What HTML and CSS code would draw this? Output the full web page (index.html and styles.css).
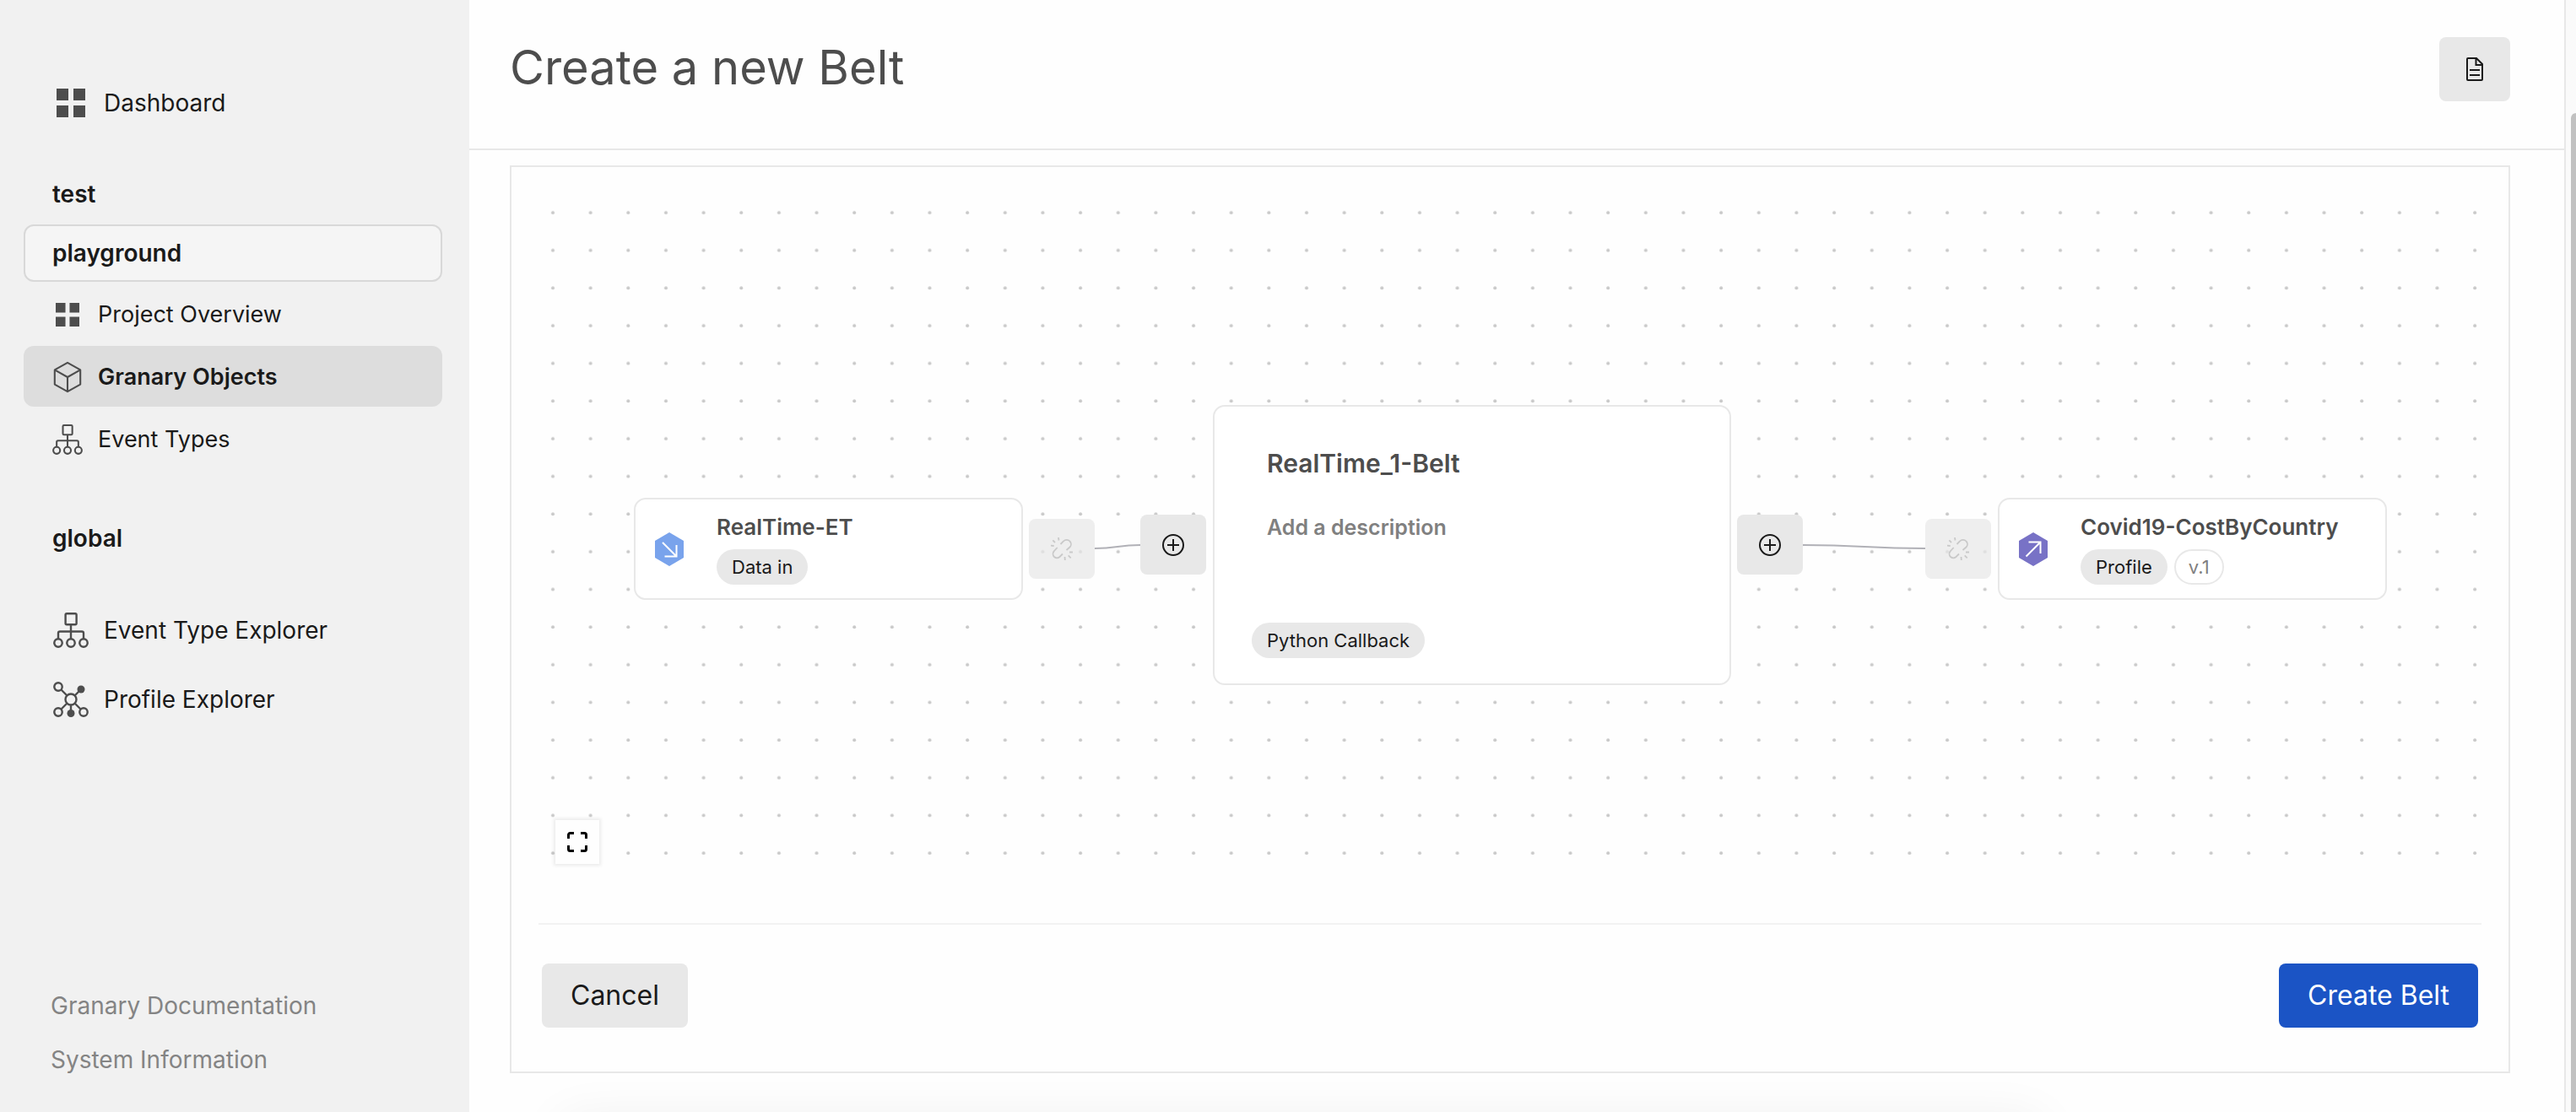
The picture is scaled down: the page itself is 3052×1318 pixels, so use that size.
FILE: index.html
```html
<!DOCTYPE html>
<html lang="en">
<head>
<meta charset="utf-8">
<title>Create a new Belt</title>
<link rel="stylesheet" href="styles.css">
</head>
<body>
<svg class="defs" aria-hidden="true">
  <symbol id="i-grid" viewBox="0 0 34 34"><path d="M0 0h14v14H0zM20 0h14v14H20zM0 20h14v14H0zM20 20h14v14H20z" fill="currentColor"/></symbol>
  <symbol id="i-cube" viewBox="0 0 36 40"><path d="M18 2 34 11v18l-16 9-16-9V11zM2 11l16 9 16-9M18 20v18" fill="none" stroke="currentColor" stroke-width="2.200" stroke-linejoin="round"/></symbol>
  <symbol id="i-tree" viewBox="0 0 42 42"><g fill="none" stroke="currentColor" stroke-width="2.4"><rect x="14.6" y="1.2" width="13" height="13" rx="1.5"/><path d="M21 14v17M6 31v-6.500a2 2 0 0 1 2-2h26a2 2 0 0 1 2 2V31"/><circle cx="6" cy="36" r="4.700"/><circle cx="21" cy="36" r="4.700"/><circle cx="36" cy="36" r="4.700"/></g></symbol>
  <symbol id="i-hub" viewBox="0 0 42 42"><g fill="none" stroke="currentColor" stroke-width="2.4"><circle cx="21" cy="21" r="6.500"/><circle cx="6" cy="6" r="4.700"/><circle cx="6" cy="36" r="4.700"/><circle cx="36" cy="36" r="4.700"/><path d="m9.500 9.500 7 7M9.500 32.500l7-7M32.500 32.500l-7-7M25.500 16.500 32 10M21 27.500V36"/></g><circle cx="33" cy="9" r="4.500" fill="currentColor"/><circle cx="21" cy="37.500" r="4.500" fill="currentColor"/></symbol>
  <symbol id="i-plus" viewBox="0 0 26 26"><path d="M13 6v14M6 13h14" fill="none" stroke="currentColor" stroke-width="2"/><circle cx="13" cy="13" r="12" fill="none" stroke="currentColor" stroke-width="2"/></symbol>
  <symbol id="i-unlink" viewBox="0 0 26 28"><path d="M11.500 8 15 4.500a5 5 0 0 1 7.500 0 5 5 0 0 1 0 7L18.500 15M7.700 12 4 16a5 5 0 0 0 0 7 5 5 0 0 0 6.500 0L14 19.500M9 0l.5 3.500M2.300 3.300 5 6M0 9.700l3.700.3M16.500 23l.3 4M20.700 21.300l3 3M22 17.500h4" fill="none" stroke="currentColor" stroke-width="1.800"/></symbol>
</svg>

<div class="app">
  <aside class="sidebar">
    <nav class="nav">
      <a class="link link-top" href="#"><svg class="icon-grid"><use href="#i-grid"/></svg>Dashboard</a>
      <a class="project project-test" href="#">test</a>
      <a class="project project-open" href="#">playground</a>
      <a class="link link-sub" href="#"><svg class="icon-sub icon-sub-grid"><use href="#i-grid"/></svg>Project Overview</a>
      <a class="link link-sub link-active" href="#"><svg class="icon-sub"><use href="#i-cube"/></svg>Granary Objects</a>
      <a class="link link-sub" href="#"><svg class="icon-sub"><use href="#i-tree"/></svg>Event Types</a>
      <p class="project project-global">global</p>
      <a class="link link-explorer" href="#"><svg class="icon-large"><use href="#i-tree"/></svg>Event Type Explorer</a>
      <a class="link link-explorer" href="#"><svg class="icon-large"><use href="#i-hub"/></svg>Profile Explorer</a>
    </nav>
    <div class="sidebar-foot">
      <a class="foot-link" href="#">Granary Documentation</a>
      <a class="foot-link" href="#">System Information</a>
    </div>
  </aside>

  <main class="main">
    <header class="header">
      <h1 class="title">Create a new Belt</h1>
      <button class="btn btn-doc" type="button" aria-label="Documentation">
        <svg width="20" height="28" viewBox="0 0 20 28" fill="none" stroke="currentColor" stroke-width="2"><path d="M2 1h10l7 7v18a1 1 0 0 1-1 1H2a1 1 0 0 1-1-1V2a1 1 0 0 1 1-1zM11.500 1v8H19M4 15h12M4 21h12"/></svg>
      </button>
    </header>

    <section class="panel">
      <div class="canvas">
        <svg class="dots" aria-hidden="true">
          <defs><pattern id="dot" x="-5" y="0" width="44.650" height="44.650" patternUnits="userSpaceOnUse"><circle cx="22" cy="22" r="2" fill="#c9c9c9"/></pattern></defs>
          <rect width="100%" height="100%" fill="url(#dot)"/>
        </svg>
        <div class="flow">
          <svg class="edges" viewBox="0 0 2078 332" aria-hidden="true"><path d="M546 170C573 170 573 166 600 166M1385 166C1458 166 1458 170 1530 170" fill="none" stroke="#b1b1b7" stroke-width="2"/></svg>
          <article class="node node-source">
            <svg class="hex" width="36" height="40" viewBox="0 0 36 40"><path d="M18 0l17 10v20L18 40 1 30V10z" fill="#79a3ec"/><path d="M10 12l16 16M12.500 28.500H26.500V15" fill="none" stroke="#fff" stroke-width="2"/></svg>
            <div class="node-body">
              <h2 class="node-title">RealTime-ET</h2>
              <div class="chips"><span class="chip">Data in</span></div>
            </div>
          </article>
          <button class="port port-off port-source" type="button" disabled aria-label="Unlink input"><svg width="26" height="28"><use href="#i-unlink"/></svg></button>
          <button class="port port-in" type="button" aria-label="Add input"><svg width="26" height="26"><use href="#i-plus"/></svg></button>
          <article class="node node-belt">
            <h2 class="belt-title">RealTime_1-Belt</h2>
            <p class="belt-text">Add a description</p>
            <span class="chip chip-belt">Python Callback</span>
          </article>
          <button class="port port-out" type="button" aria-label="Add output"><svg width="26" height="26"><use href="#i-plus"/></svg></button>
          <button class="port port-off port-target" type="button" disabled aria-label="Unlink output"><svg width="26" height="28"><use href="#i-unlink"/></svg></button>
          <article class="node node-target">
            <svg class="hex" width="36" height="40" viewBox="0 0 36 40"><path d="M18 0l17 10v20L18 40 1 30V10z" fill="#7872c6"/><path d="M9.500 28.500 26 12M12.500 11.500H26.500V25" fill="none" stroke="#fff" stroke-width="2"/></svg>
            <div class="node-body">
              <h2 class="node-title">Covid19-CostByCountry</h2>
              <div class="chips"><span class="chip">Profile</span><span class="chip chip-line">v.1</span></div>
            </div>
          </article>
        </div>
        <button class="fit" type="button" aria-label="Fit view"><svg width="24" height="24" viewBox="0 0 24 24" fill="none" stroke="#000" stroke-width="3"><path d="M1.500 8V3.500a2 2 0 0 1 2-2H8M16 1.500h4.500a2 2 0 0 1 2 2V8M22.500 16v4.500a2 2 0 0 1-2 2H16M8 22.500H3.500a2 2 0 0 1-2-2V16"/></svg></button>
      </div>
      <footer class="actions">
        <button class="btn" type="button">Cancel</button>
        <button class="btn btn-primary" type="button">Create Belt</button>
      </footer>
    </section>
    <div class="tray" aria-hidden="true"></div>
  </main>
  <div class="scroll" aria-hidden="true"><div class="thumb"></div></div>
</div>
</body>
</html>
```
FILE: styles.css
```css
* { box-sizing: border-box; }

body {
  margin: 0;
  background: #fefefe;
  color: #1a1a1a;
  font-family: Inter, "Liberation Sans", sans-serif;
  font-size: 28px;
  line-height: 36px;
}

h1, h2, p { margin: 0; font-weight: inherit; font-size: inherit; }
a { color: inherit; text-decoration: none; }
button { font: inherit; color: inherit; border: 0; padding: 0; cursor: pointer; }
svg { display: block; flex: none; }
.defs { position: absolute; width: 0; height: 0; }

.app { display: flex; height: 100vh; overflow: hidden; }

/* Sidebar */
.sidebar {
  flex: none;
  width: 556px;
  padding: 86px 32px 32px 28px;
  background: #f1f1f1;
  display: flex;
  flex-direction: column;
  justify-content: space-between;
}
.nav { display: flex; flex-direction: column; }
.link { display: flex; align-items: center; border-radius: 12px; }
.link svg { color: #4d4d4d; }
.link-top { height: 72px; padding-left: 39px; gap: 22px; }
.link-sub { height: 72px; margin-top: 2px; padding: 2px 0 0 34px; gap: 18px; font-size: 27px; }
.link-active { background: #dddddd; font-weight: 600; }
.link-explorer { height: 82px; padding-left: 35px; gap: 18px; }
.icon-grid { width: 34px; height: 34px; }
.icon-sub { width: 36px; height: 38px; }
.icon-sub-grid { padding: 4px; }
.icon-large { width: 42px; height: 42px; }

.project {
  display: flex;
  align-items: center;
  height: 68px;
  padding-left: 32px;
  border: 2px solid transparent;
  border-radius: 12px;
  font-weight: 600;
}
.project-test { margin-top: 38px; }
.project-open { margin-top: 2px; background: #f5f5f5; border-color: #d8d8d8; }
.project-global { margin: 48px 0 34px; }

.sidebar-foot { display: flex; flex-direction: column; gap: 28px; padding: 0 0 12px 32px; color: #848484; }

/* Main column */
.main { flex: 1; min-width: 0; display: flex; flex-direction: column; position: relative; overflow: hidden; }
.header {
  display: flex;
  justify-content: space-between;
  align-items: flex-start;
  height: 178px;
  padding: 44px 64px 0 48px;
  border-bottom: 2px solid #e8e8e8;
}
.title { font-size: 56px; line-height: 72px; color: #4d4d4d; }
.btn {
  height: 76px;
  padding: 0 34px;
  border-radius: 8px;
  background: #e8e8e8;
  font-size: 32px;
}
.btn-doc { width: 84px; padding: 0; display: grid; place-items: center; }
.btn-primary { background: #1b54c5; color: #fff; }

.panel { margin: 18px 64px 0 48px; padding: 32px; border: 2px solid #e8e8e8; }

/* Belt canvas */
.canvas {
  position: relative;
  display: grid;
  justify-items: center;
  height: 864px;
  padding-top: 250px;
}
.dots { position: absolute; inset: 0; width: 100%; height: 800px; }
.flow { position: relative; width: 2076px; height: 332px; }
.edges { position: absolute; left: 0; top: 0; width: 2078px; height: 332px; }
.node { position: absolute; border: 2px solid #e8e8e8; border-radius: 14px; background: #fff; }
.node-source, .node-target { top: 110px; width: 461px; height: 121px; display: flex; align-items: center; padding: 0 22px; gap: 38px; }
.node-source { left: 0; }
.node-target { left: 1616px; }
.node-body { display: flex; flex-direction: column; gap: 9px; }
.node-title { font-size: 26px; line-height: 34px; font-weight: 600; color: #4d4d4d; }
.chips { display: flex; gap: 8px; }
.chip {
  height: 42px;
  padding: 0 18px;
  border-radius: 21px;
  background: #e8e8e8;
  font-size: 22px;
  line-height: 42px;
}
.chip-line { border: 2px solid #e8e8e8; background: none; padding: 0 15px; line-height: 38px; color: #808080; }

.node-belt {
  left: 686px;
  top: 0;
  width: 614px;
  height: 332px;
  padding: 47px 44px 30px;
  display: flex;
  flex-direction: column;
  align-items: flex-start;
}
.belt-title { padding-left: 18px; font-size: 30px; line-height: 40px; font-weight: 600; color: #4d4d4d; }
.belt-text { padding: 39px 0 0 18px; font-size: 25px; line-height: 34px; font-weight: 600; color: #808080; }
.chip-belt { margin-top: auto; }

.port {
  position: absolute;
  top: 130px;
  width: 78px;
  height: 71px;
  border-radius: 8px;
  background: #e8e8e8;
  display: grid;
  place-items: center;
}
.port-off { top: 135px; opacity: 0.7; color: #b3b3b3; }
.port-source { left: 468px; }
.port-in { left: 600px; }
.port-out { left: 1307px; }
.port-target { left: 1530px; }

.fit {
  position: absolute;
  left: 20px;
  bottom: 70px;
  width: 52px;
  height: 52px;
  background: #fefefe;
  display: grid;
  place-items: center;
  box-shadow: 0 0 4px 2px rgba(0, 0, 0, 0.08);
}

.actions { display: flex; justify-content: space-between; padding: 46px 4px 20px; border-top: 2px solid #f2f2f2; }

/* Shadow cast by the tray parked under the window */
.tray { position: absolute; left: 110px; right: 620px; bottom: -60px; height: 50px; box-shadow: 0 0 60px rgba(0, 0, 0, 0.07); }

.scroll { flex: none; width: 14px; padding: 134px 0 0 6px; border-left: 2px solid #e8e8e8; background: #fafafa; }
.thumb { height: 100%; border-radius: 6px 0 0 0; background: #c1c1c1; }
```
